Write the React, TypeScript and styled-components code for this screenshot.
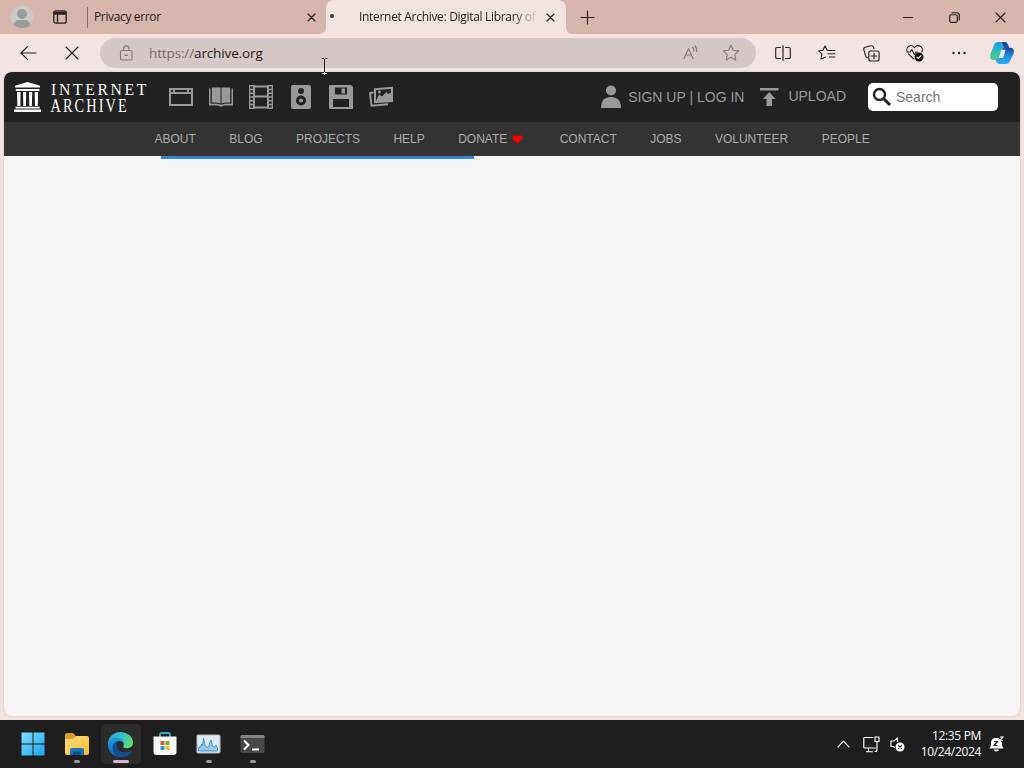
import React from 'react';
import styled, { createGlobalStyle } from 'styled-components';

const GlobalStyle = createGlobalStyle`
  * {
    box-sizing: border-box;
  }
  body {
    margin: 0;
    overflow: hidden;
    font-family: 'Open Sans', 'Noto Sans', sans-serif;
  }
  svg {
    display: block;
    flex: none;
  }
`;

const Desktop = styled.div`
  width: 1024px;
  height: 768px;
  position: relative;
  display: flex;
  flex-direction: column;
  background: #efe2e1;
`;

/* browser chrome */

const TabStrip = styled.header`
  height: 34px;
  display: flex;
  background: #d7b4ac;
`;

const StripButton = styled.div<{ $width: number }>`
  width: ${(props) => props.$width}px;
  display: flex;
  align-items: center;
  justify-content: center;
`;

const Tab = styled.div<{ $active?: boolean }>`
  width: ${(props) => (props.$active ? 240 : 239)}px;
  height: 34px;
  padding: 0 7px 0 ${(props) => (props.$active ? 3 : 6)}px;
  display: flex;
  align-items: center;
  position: relative;
  color: #2b1b18;
  background: ${(props) => (props.$active ? '#f1e3e0' : 'transparent')};
  border-left: ${(props) => (props.$active ? 'none' : '1px solid #8d6a64')};
  border-image: linear-gradient(
      transparent 8px,
      #8d6a64 8px,
      #8d6a64 27px,
      transparent 27px
    )
    1;
  border-radius: 8px 8px 0 0;

  &::before,
  &::after {
    content: ${(props) => (props.$active ? "''" : 'none')};
    position: absolute;
    bottom: 0;
    width: 6px;
    height: 6px;
  }
  &::before {
    left: -6px;
    background: radial-gradient(circle at 0 0, transparent 5.5px, #f1e3e0 6px);
  }
  &::after {
    right: -6px;
    background: radial-gradient(
      circle at 100% 0,
      transparent 5.5px,
      #f1e3e0 6px
    );
  }
`;

const TabTitle = styled.span<{ $fade?: boolean }>`
  flex: 1;
  margin-right: ${(props) => (props.$fade ? 4 : 0)}px;
  white-space: nowrap;
  font-size: 12px;
  line-height: 18px;
  letter-spacing: ${(props) => (props.$fade ? -0.31 : -0.36)}px;
  mask-image: ${(props) =>
    props.$fade
      ? 'linear-gradient(to right, #000 86%, rgba(0, 0, 0, 0.15) 98%)'
      : 'none'};
`;

const Spinner = styled.span`
  width: 30px;
  height: 34px;
  padding: 14px 0 0 1px;
  &::before {
    content: '';
    display: block;
    width: 4px;
    height: 4px;
    border-radius: 50%;
    background: #333;
  }
`;

const WindowControls = styled.div`
  margin-left: auto;
  margin-right: 1px;
  display: flex;
`;

const Toolbar = styled.div`
  height: 38px;
  padding-left: 6px;
  display: flex;
  align-items: center;
  background: linear-gradient(#ffe0dc 0, #f3e3e1 4px, #f0e4e2 100%);
`;

const ToolButton = styled.div<{ $width?: number }>`
  width: ${(props) => props.$width ?? 44}px;
  height: 30px;
  flex: none;
  display: flex;
  align-items: center;
  justify-content: center;
`;

const AddressBar = styled.div`
  width: 656px;
  height: 30px;
  flex: none;
  margin: 0 5px 0 6px;
  padding: 0 16px 0 18px;
  display: flex;
  align-items: center;
  border-radius: 15px;
  background: #d3c8c5;
`;

const Url = styled.span`
  flex: 1;
  margin-left: 15px;
  font-size: 13.5px;
  line-height: 20px;
  letter-spacing: -0.13px;
  color: #241f1e;
  span {
    color: #756b69;
  }
`;

const AddressIcons = styled.div`
  display: flex;
  align-items: center;
  gap: 22px;
`;

/* archive.org page */

const Page = styled.main`
  height: 644px;
  margin: 0 4px 4px;
  display: flex;
  flex-direction: column;
  overflow: hidden;
  border-radius: 8px;
  background: #f5f5f5;
  box-shadow: 0 0 2px #d9b9bd;
  font-family: 'Liberation Sans', Arial, sans-serif;
`;

const TopNav = styled.nav`
  height: 50px;
  padding: 0 22px 0 10px;
  display: flex;
  align-items: center;
  background: #222;
  color: #999;
  font-size: 14px;
`;

const MediaLinks = styled.div`
  margin-left: 13px;
  display: flex;
`;

const MediaLink = styled.a`
  width: 40px;
  display: flex;
  justify-content: center;
`;

const UserLinks = styled.div`
  margin-left: auto;
  display: flex;
  align-items: center;
`;

const NavLabel = styled.span<{ $left: number; $right: number; $raise?: boolean }>`
  margin: 0 ${(props) => props.$right}px 0 ${(props) => props.$left}px;
  padding-bottom: ${(props) => (props.$raise ? 1 : 0)}px;
  white-space: nowrap;
  line-height: 17px;
`;

const SearchBox = styled.div`
  width: 130px;
  height: 28px;
  padding-left: 4px;
  display: flex;
  align-items: center;
  gap: 4px;
  border-radius: 5px;
  background: #fff;
  color: #757575;
`;

const SubNav = styled.ul`
  height: 34px;
  margin: 0;
  padding: 0 0 0 150.5px;
  display: flex;
  align-items: center;
  gap: 33.4px;
  list-style: none;
  background: #333;
  color: #aaa;
  font-size: 12px;
`;

const SubNavItem = styled.li`
  display: flex;
  align-items: center;
  line-height: 14px;
`;

const LoadingBar = styled.div`
  width: 313px;
  height: 3px;
  margin-left: 157px;
  background: #3584de;
`;

/* taskbar */

const Taskbar = styled.footer`
  height: 48px;
  padding: 0 20px 0 12.5px;
  display: flex;
  align-items: center;
  justify-content: space-between;
  background: #1e1e1e;
  color: #fff;
`;

const Apps = styled.div`
  display: flex;
  gap: 4px;
`;

const AppButton = styled.div<{ $active?: boolean }>`
  width: 40px;
  height: 40px;
  padding-top: 8px;
  display: flex;
  flex-direction: column;
  align-items: center;
  justify-content: space-between;
  border-radius: 4px;
  background: ${(props) => (props.$active ? '#2b2b2b' : 'transparent')};
`;

const Indicator = styled.span<{ $active?: boolean }>`
  width: ${(props) => (props.$active ? 16 : 6)}px;
  height: 3px;
  border-radius: 2px;
  background: ${(props) => (props.$active ? '#d5b2dc' : '#999')};
  margin-bottom: 1px;
`;

const Tray = styled.div`
  display: flex;
  align-items: center;
`;

const TrayIcon = styled.div<{ $gap: number }>`
  margin-right: ${(props) => props.$gap}px;
`;

const Clock = styled.div`
  margin-right: 8px;
  text-align: right;
  font-size: 12px;
  line-height: 16px;
  letter-spacing: -0.34px;
`;

const TextCursor = styled.svg`
  position: absolute;
  left: 320px;
  top: 57px;
`;

const stroke = {
  fill: 'none',
  stroke: '#2a2221',
  strokeWidth: 1.15,
  strokeLinecap: 'round' as const,
  strokeLinejoin: 'round' as const,
};

function Cross({ size }: { size: number }) {
  return (
    <svg width={size} height={size} viewBox={`0 0 ${size} ${size}`} {...stroke}>
      <path d={`M1 1L${size - 1} ${size - 1}M${size - 1} 1L1 ${size - 1}`} />
    </svg>
  );
}

function BrowserTabs() {
  return (
    <TabStrip>
      <StripButton $width={44}>
        <svg width="24" height="24" viewBox="0 0 24 24">
          <circle cx="12" cy="12" r="11.5" fill="#ccc9c5" />
          <circle cx="12" cy="9" r="5" fill="#969d9a" />
          <path d="M3.500 19.500Q5 15 9 15h6q4 0 5.500 4.500A11.500 11.500 0 0 1 3.500 19.500Z" fill="#969d9a" />
        </svg>
      </StripButton>
      <StripButton $width={32}>
        <svg width="14" height="14" viewBox="0 0 14 14" {...stroke} strokeWidth="1.3">
          <rect x="0.800" y="0.800" width="12.400" height="12.400" rx="2" />
          <path d="M1 2.500h12M1 4h12M4.500 4v9" />
        </svg>
      </StripButton>
      <StripButton $width={11} />
      <Tab>
        <TabTitle>Privacy error</TabTitle>
        <StripButton $width={16}>
          <Cross size={9} />
        </StripButton>
      </Tab>
      <Tab $active>
        <Spinner />
        <TabTitle $fade>Internet Archive: Digital Library of</TabTitle>
        <StripButton $width={17}>
          <Cross size={9} />
        </StripButton>
      </Tab>
      <StripButton $width={43}>
        <svg width="15" height="15" viewBox="0 0 15 15" {...stroke}>
          <path d="M7.500 1v13M1 7.500h13" />
        </svg>
      </StripButton>
      <WindowControls>
        <StripButton $width={46}>
          <svg width="10" height="10" viewBox="0 0 10 10" {...stroke} strokeWidth="1">
            <path d="M0.500 5.500h9" />
          </svg>
        </StripButton>
        <StripButton $width={46}>
          <svg width="11" height="11" viewBox="0 0 11 11" {...stroke}>
            <rect x="0.700" y="2.700" width="7.600" height="7.600" rx="1.600" />
            <path d="M3 0.700h4.700a2.600 2.600 0 0 1 2.600 2.600V8" />
          </svg>
        </StripButton>
        <StripButton $width={46}>
          <Cross size={11} />
        </StripButton>
      </WindowControls>
    </TabStrip>
  );
}

function BrowserToolbar() {
  return (
    <Toolbar>
      <ToolButton>
        <svg width="17" height="14" viewBox="0 0 17 14" {...stroke}>
          <path d="M16 7H1M7.500 0.700L1 7l6.500 6.300" />
        </svg>
      </ToolButton>
      <ToolButton>
        <Cross size={14} />
      </ToolButton>
      <AddressBar>
        <svg width="16" height="16" viewBox="0 0 16 16" {...stroke} stroke="#857b79">
          <rect x="2.500" y="5.500" width="11.500" height="9.500" rx="1.500" />
          <path d="M5.500 5.500V3.500a2.700 2.700 0 0 1 5.400 0v2" />
          <path d="M7.200 10.200h2" strokeWidth="1.600" />
        </svg>
        <Url>
          <span>https://</span>archive.org
        </Url>
        <AddressIcons>
          <svg width="18" height="16" viewBox="0 0 18 16" {...stroke} stroke="#857b79">
            <path d="M2 13.500L6.500 3.500 11 13.500M3.700 10h5.600M10.700 2.500q1.500 1.500 1.300 3.500M13 1q2.300 2.400 1.700 5.500" />
          </svg>
          <svg width="18" height="18" viewBox="0 0 18 18" {...stroke} stroke="#857b79">
            <path d="M9 1.300l2.350 4.900 5.300.7-3.900 3.700 1 5.300L9 13.300l-4.750 2.600 1-5.300-3.900-3.700 5.300-.7Z" />
          </svg>
        </AddressIcons>
      </AddressBar>
      <ToolButton>
        <svg width="16" height="16" viewBox="0 0 16 16" {...stroke}>
          <path d="M8 0.600v14.800M5.500 2.500H2A1.300 1.300 0 0 0 .7 3.800v8.400A1.300 1.300 0 0 0 2 13.500h3.500M10.500 2.500H14a1.300 1.300 0 0 1 1.300 1.300v8.400a1.300 1.300 0 0 1-1.300 1.300h-3.500" />
        </svg>
      </ToolButton>
      <ToolButton>
        <svg width="18" height="16" viewBox="0 0 18 16" {...stroke}>
          <path d="M11 5.500L9.200 5.200 7 .9 4.900 5.200l-4.200.6 3.100 3.100-.7 5.200L7.600 12M11.500 5.500h5.300M9.800 8.700h7M11.300 12h5.500" />
        </svg>
      </ToolButton>
      <ToolButton>
        <svg width="17" height="17" viewBox="0 0 17 17" {...stroke}>
          <rect x="5.800" y="6" width="10.300" height="10" rx="2" />
          <path d="M11 8.200v5.600M8.200 11h5.600M4.500 12.800A2.200 2.200 0 0 1 2.700 11L.8 4.700a2 2 0 0 1 1.400-2.500L8 .8a2 2 0 0 1 2.500 1.400l.5 1.500" />
        </svg>
      </ToolButton>
      <ToolButton>
        <svg width="18" height="17" viewBox="0 0 18 17" {...stroke}>
          <path d="M7.800 14L2.400 8.800M1.400 7A4 4 0 0 1 8.500 2.700 4 4 0 0 1 15.800 7M1 7h3.200l1.600-2.500 2.500 5L10 7h1.500" />
          <circle cx="13" cy="12" r="4.500" fill="#161212" stroke="none" />
          <path d="M11 12.200l1.300 1.300 2.600-2.800" stroke="#f0e4e2" />
        </svg>
      </ToolButton>
      <ToolButton>
        <svg width="14" height="4" viewBox="0 0 14 4" fill="#2a2221">
          <circle cx="1.500" cy="2" r="1.200" />
          <circle cx="7" cy="2" r="1.200" />
          <circle cx="12.500" cy="2" r="1.200" />
        </svg>
      </ToolButton>
      <ToolButton $width={41}>
        <svg width="24" height="24" viewBox="0 0 24 24">
          <defs>
            <linearGradient id="copilotLeft" x1="0" y1="0" x2="0" y2="1">
              <stop offset="0" stopColor="#1c9ade" />
              <stop offset="0.5" stopColor="#31b8c2" />
              <stop offset="1" stopColor="#52cf7c" />
            </linearGradient>
            <linearGradient id="copilotRight" x1="0" y1="0" x2="0" y2="1">
              <stop offset="0" stopColor="#16459e" />
              <stop offset="0.45" stopColor="#2384df" />
              <stop offset="1" stopColor="#28b4f2" />
            </linearGradient>
          </defs>
          <path d="M8 1h7q2 0 3 3l1 4h-5q-2 0-3 3l-2 6q-.6 2-3 2H4q-5 0-3.500-6L4 4q1-3 4-3Z" fill="url(#copilotLeft)" />
          <path d="M16 23H9q-2 0-3-3l-.4-1.200Q8.500 18.500 9.500 16L12 9q.8-2.300 3-2.300h5q5 0 3.500 6L20 20q-1 3-4 3Z" fill="url(#copilotRight)" />
          <path d="M11.500 8.700h4.200L13 17H8.800Z" fill="#e9eef0" />
          <path d="M12 1h3q2.300 0 3.200 3l.9 2.900h-4.800Q12.800 4 12 1Z" fill="#194c9f" />
        </svg>
      </ToolButton>
    </Toolbar>
  );
}

function ArchiveLogo() {
  return (
    <svg width="134" height="34" viewBox="0 0 134 34" fill="#fff">
      <path d="M13.500 2L26 5.800v1.700H1V5.800ZM1.800 9h23.600v2H1.800ZM0 29.500h27V32H0ZM1.500 26.800h24.200v1.700H1.500Z" />
      <path d="M3 12h3.600l-.3 14H3.400ZM9 12h3.200l-.3 14H9.300ZM15 12h3.200l-.3 14h-2.600ZM20.700 12h3.500l-.4 14h-2.800Z" />
      <g fontFamily="'Liberation Serif', serif" fontSize="17.500">
        <text transform="translate(37 14.500) scale(0.900 1)" textLength="106">
          INTERNET
        </text>
        <text transform="translate(36.500 32) scale(0.820 1.060)" textLength="93">
          ARCHIVE
        </text>
      </g>
    </svg>
  );
}

function MediaIcons() {
  return (
    <MediaLinks>
      <MediaLink>
        <svg width="24" height="24" viewBox="0 0 24 24" fill="#999">
          <path fillRule="evenodd" d="M0 3h24v18H0ZM2 9v10h20V9ZM2 5v2h2V5ZM6 5v2h12V5ZM20 5v2h2V5Z" />
        </svg>
      </MediaLink>
      <MediaLink>
        <svg width="24" height="24" viewBox="0 0 24 24" fill="#999">
          <path d="M2.800 2.500h8.700V18.500Q8 17 2.800 17.500ZM12.500 2.500h8.700v15q-5.200-.5-8.700 1Z" />
          <path d="M0 3.500h1.500v15.300q5.500-.8 9.500.7h2q4-1.500 9.500-.7V3.500H24V20.500h-9l-2 1h-2l-2-1H0Z" />
        </svg>
      </MediaLink>
      <MediaLink>
        <svg width="24" height="24" viewBox="0 0 24 24" fill="none" stroke="#999">
          <path d="M5 0v24M19 0v24" strokeWidth="2" />
          <path d="M5 1.500h14M5 11.500h14M5 22.500h14" strokeWidth="2" />
          <path d="M.7 0v24M23.300 0v24" strokeWidth="1.300" />
          <path d="M2.500 0v24M21.500 0v24" strokeWidth="4" strokeDasharray="1.500 2.250" />
        </svg>
      </MediaLink>
      <MediaLink>
        <svg width="20" height="24" viewBox="0 0 20 24">
          <rect width="20" height="24" rx="2" fill="#999" />
          <circle cx="10" cy="6" r="3" fill="#222" />
          <circle cx="10" cy="15.500" r="5" fill="#222" />
          <circle cx="10" cy="15.500" r="2" fill="#999" />
        </svg>
      </MediaLink>
      <MediaLink>
        <svg width="24" height="24" viewBox="0 0 24 24" fill="#999">
          <path fillRule="evenodd" d="M1 0h21l2 2v22H1l-1-1V1ZM6 2.500v7h12V2.500ZM4 14v8h16v-8Z" />
          <path d="M12.500 3.500h3.500v5h-3.500Z" />
        </svg>
      </MediaLink>
      <MediaLink>
        <svg width="24" height="24" viewBox="0 0 24 24" fill="none" stroke="#999" strokeWidth="2">
          <path d="M6 4.200L23 2.800V16L6 17.200Z" />
          <path d="M4.500 7.500L1 8l1.500 12.700L19 19.200" />
          <path d="M7 16l3-6.500 3 2 4.500-4.500 1.500 2L23 7V16L7 17Z" fill="#999" stroke="none" />
          <circle cx="10.500" cy="7" r="1.400" fill="#999" stroke="none" />
        </svg>
      </MediaLink>
    </MediaLinks>
  );
}

const subLinks = [
  'ABOUT',
  'BLOG',
  'PROJECTS',
  'HELP',
  'DONATE',
  'CONTACT',
  'JOBS',
  'VOLUNTEER',
  'PEOPLE',
];

function ArchivePage() {
  return (
    <Page>
      <TopNav>
        <ArchiveLogo />
        <MediaIcons />
        <UserLinks>
          <svg width="20" height="24" viewBox="0 0 20 24" fill="#999">
            <circle cx="10" cy="5.500" r="5" />
            <path d="M0 23q0-11 10-11t10 11Z" />
          </svg>
          <NavLabel $left={7} $right={16}>
            SIGN UP | LOG IN
          </NavLabel>
          <svg width="19" height="20" viewBox="0 0 19 20" fill="#999">
            <path d="M0 1h18.500v2.500H0ZM9.300 5l6.200 7h-3.500v7H6.500v-7H3Z" />
          </svg>
          <NavLabel $left={9} $right={22} $raise>
            UPLOAD
          </NavLabel>
          <SearchBox>
            <svg width="20" height="20" viewBox="0 0 20 20" fill="none" stroke="#222">
              <circle cx="7.500" cy="7.500" r="5.500" strokeWidth="2.400" />
              <path d="M11.500 11.500l6.500 6.500" strokeWidth="3" />
            </svg>
            Search
          </SearchBox>
        </UserLinks>
      </TopNav>
      <SubNav>
        {subLinks.map((link) => (
          <SubNavItem key={link}>
            {link}
            {link === 'DONATE' && (
              <svg width="19" height="10" viewBox="0 0 19 10" fill="#f00">
                <path d="M10.500 9.500L5.500 5Q5 1.500 7.500 1.500t3 .7q.5-.7 3-.7t2 3.500Z" />
              </svg>
            )}
          </SubNavItem>
        ))}
      </SubNav>
      <LoadingBar />
    </Page>
  );
}

function WindowsTaskbar() {
  return (
    <Taskbar>
      <Apps>
        <AppButton>
          <svg width="24" height="24" viewBox="0 0 24 24">
            <defs>
              <linearGradient id="winLogo" x1="0" y1="0" x2="1" y2="1">
                <stop offset="0" stopColor="#7fdcfb" />
                <stop offset="1" stopColor="#1ba5f0" />
              </linearGradient>
            </defs>
            <path d="M.5.500h11v11H.5ZM12.500.500h11v11h-11ZM.5 12.500h11v11H.5ZM12.500 12.500h11v11h-11Z" fill="url(#winLogo)" />
          </svg>
        </AppButton>
        <AppButton>
          <svg width="26" height="24" viewBox="0 0 26 24">
            <defs>
              <linearGradient id="folder" x1="0" y1="0" x2="1" y2="1">
                <stop offset="0" stopColor="#ffdf82" />
                <stop offset="1" stopColor="#f5b92e" />
              </linearGradient>
            </defs>
            <path d="M1 3q0-2 2-2h6l3 3h8v6H1Z" fill="#dd9c23" />
            <path d="M1 7h8l3-3h11q2 0 2 2v15q0 2-2 2H3q-2 0-2-2Z" fill="url(#folder)" />
            <path d="M6 23v-5q0-2 2-2h10q2 0 2 2v5Z" fill="#1c72b8" />
            <path d="M9 19.500h8V23H9Z" fill="#124f8f" />
          </svg>
          <Indicator />
        </AppButton>
        <AppButton $active>
          <svg width="25" height="25" viewBox="0 0 24 24">
            <defs>
              <linearGradient id="edgeTop" x1="0" y1="0.300" x2="1" y2="0.600">
                <stop offset="0" stopColor="#2baee5" />
                <stop offset="0.550" stopColor="#36c5c3" />
                <stop offset="1" stopColor="#68dc65" />
              </linearGradient>
              <linearGradient id="edgeBody" x1="0" y1="0" x2="0" y2="1">
                <stop offset="0" stopColor="#1f9ae0" />
                <stop offset="1" stopColor="#1765b7" />
              </linearGradient>
            </defs>
            <path d="M0 12C0 5 5 0 12 0s12 5 12 10c0 3.500-2.500 5.500-6 5.500-3 0-4-1-3.200-2 1.200-2-.3-5-4.300-5-4 0-7 3-7 8L1 15Z" fill="url(#edgeTop)" />
            <path d="M0 12c0-4 4-6.500 8-6.500 4.500 0 7.500 2.500 7.500 5.500 0-1.500-1.500-2.500-3.200-2.500C9 8.500 8 11 8 13c0 4 4 7 8 7 3 0 5-1 6-1.700 1-.5 1 .2.500 1C20.500 22 17 24 12 24 5 24 0 19 0 12Z" fill="url(#edgeBody)" />
            <path d="M9 23.600C5 21 3.700 17 4.800 13c1-3 3.500-4.500 6.500-4.500C9 9 8 11 8 13c0 4 4 7 8 7 3 0 5-1 6-1.700 1-.5 1 .2.500 1C20.500 22 16 25 9 23.600Z" fill="#124f91" />
          </svg>
          <Indicator $active />
        </AppButton>
        <AppButton>
          <svg width="24" height="24" viewBox="0 0 24 24">
            <path d="M7 5V2.500Q7 1 8.500 1h7Q17 1 17 2.500V5" fill="none" stroke="#2ca9c9" strokeWidth="1.800" />
            <path d="M.5 4.500h23V20q0 3-3 3h-17q-3 0-3-3Z" fill="#f8f8f8" />
            <path d="M7.500 9h4v4h-4Z" fill="#e65330" />
            <path d="M12.500 9h4v4h-4Z" fill="#78ad32" />
            <path d="M7.500 14h4v4h-4Z" fill="#279ed2" />
            <path d="M12.500 14h4v4h-4Z" fill="#f1b833" />
          </svg>
        </AppButton>
        <AppButton>
          <svg width="25" height="24" viewBox="0 0 24 24">
            <rect x="0.500" y="3" width="23" height="18" rx="1" fill="#dceaf5" stroke="#b6c0c8" />
            <path d="M2 19v-3l2-1 1-3 1 2 1-8 1.500 7 1.500 2 2 0 1.500-5 1-2 1.500 6 2 1 1.500-2 1.500 3V19Z" fill="#9bc7e6" stroke="#3387bd" strokeWidth="0.800" />
          </svg>
          <Indicator />
        </AppButton>
        <AppButton>
          <svg width="25" height="24" viewBox="0 0 24 24">
            <rect x="0" y="3" width="24" height="18" rx="1.500" fill="#484848" />
            <path d="M0 6V4.500Q0 3 1.500 3h21Q24 3 24 4.500V6Z" fill="#858585" />
            <path d="M3.500 8.500L8 13l-4.500 4.500M11.500 17.500h7" fill="none" stroke="#fff" strokeWidth="2" />
          </svg>
          <Indicator />
        </AppButton>
      </Apps>
      <Tray>
        <TrayIcon $gap={13}>
          <svg width="13" height="8" viewBox="0 0 13 8" {...stroke} stroke="#fff">
            <path d="M1 7l5.500-5.800L12 7" />
          </svg>
        </TrayIcon>
        <TrayIcon $gap={10}>
          <svg width="17" height="17" viewBox="0 0 17 17" {...stroke} stroke="#fff">
            <path d="M10 1.500H1.500Q.8 1.500.8 2.300v9q0 .7.7.7h11M5.500 12v3.500M3.500 15.700h6M12 1h4v4.500h-4ZM14 5.500v8q0 2-2 2" />
          </svg>
        </TrayIcon>
        <TrayIcon $gap={16}>
          <svg width="15" height="15" viewBox="0 0 15 15" {...stroke} stroke="#fff">
            <path d="M7.500 4.500V.8L4 4H1v5.500h2.500l1 1" />
            <circle cx="10" cy="10" r="4.500" fill="#fff" stroke="none" />
            <path d="M8.400 8.400l3.200 3.200M11.600 8.400l-3.200 3.200" stroke="#1e1e1e" />
          </svg>
        </TrayIcon>
        <Clock>
          <div>12:35 PM</div>
          <div>10/24/2024</div>
        </Clock>
        <svg width="15" height="16" viewBox="0 0 15 16">
          <path d="M2 9.500V6.500a4.500 4.500 0 0 1 4.500-4.500h3.500l3 5v2.500l1.500 3H.500ZM5 13.500h5a2.500 2 0 0 1-5 0Z" fill="#fff" />
          <path d="M5 5.500h3.500l-3.500 4h3.500" fill="none" stroke="#1e1e1e" strokeWidth="1.200" />
          <path d="M11 1h3l-3 3.500h3" fill="none" stroke="#fff" strokeWidth="1.100" />
        </svg>
      </Tray>
    </Taskbar>
  );
}

export default function App() {
  return (
    <Desktop>
      <GlobalStyle />
      <BrowserTabs />
      <BrowserToolbar />
      <ArchivePage />
      <WindowsTaskbar />
      <TextCursor width="9" height="18" viewBox="0 0 9 18" fill="none" stroke="#222">
        <path d="M1.500 1.500H3.500L4.500 2.500l1-1h2M4.500 2.500v13M1.500 16.500h2l1-1 1 1h2" />
        <path d="M2 16.500h5M4.500 15v3" stroke="#ddd" />
      </TextCursor>
    </Desktop>
  );
}
